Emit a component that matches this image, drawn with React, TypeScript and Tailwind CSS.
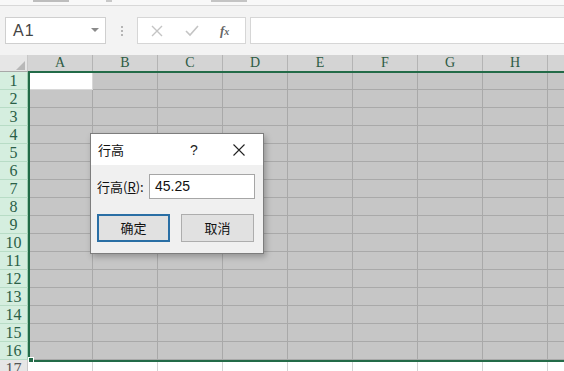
import React from 'react';

const cols = ['A', 'B', 'C', 'D', 'E', 'F', 'G', 'H', ''];
const rows = Array.from({ length: 17 }, (_, i) => i + 1);

export default function App() {
  return (
    <div className="relative w-[564px] h-[371px] overflow-hidden bg-[#f3f3f3] font-['Liberation_Sans','Noto_Sans_CJK_SC',sans-serif]">
      {/* top ribbon remnant */}
      <div className="h-[6px] bg-[#f8f8f8] border-b border-[#d8d8d8] flex items-start">
        <div className="ml-[33px] mt-0 w-[36px] h-[2px] bg-[#bdbdbd]" />
        <div className="ml-[37px] w-[6px] h-[2px] bg-[#c8c8c8]" />
        <div className="ml-[99px] w-[36px] h-[2px] bg-[#c4c4c4]" />
      </div>

      {/* formula bar */}
      <div className="flex items-center h-[27px] mt-[11px]">
        <div className="ml-[5px] w-[101px] h-[27px] bg-white border border-[#cfcfcf] flex items-center justify-between pl-[7px] pr-[6px]">
          <span className="text-[16px] text-[#444] font-['Liberation_Sans',sans-serif] tracking-[1px]">A1</span>
          <svg width="8" height="5" viewBox="0 0 8 5"><path d="M0 0 L8 0 L4 4 Z" fill="#8a8a8a" /></svg>
        </div>
        <div className="w-[31px] flex flex-col items-center gap-[2px]">
          <div className="w-[2px] h-[2px] bg-[#b5b5b5]" />
          <div className="w-[2px] h-[2px] bg-[#b5b5b5]" />
          <div className="w-[2px] h-[2px] bg-[#b5b5b5]" />
        </div>
        <div className="w-[109px] h-[27px] bg-white border border-[#d6d6d6] flex items-center">
          <svg className="ml-[13px]" width="12" height="12" viewBox="0 0 12 12"><path d="M1 1 L11 11 M11 1 L1 11" stroke="#c4c4c4" strokeWidth="1.4" /></svg>
          <svg className="ml-[22px]" width="14" height="12" viewBox="0 0 14 12"><path d="M1 6 L5 10 L13 1" stroke="#c4c4c4" strokeWidth="1.6" fill="none" /></svg>
          <span className="ml-[21px] text-[13px] italic font-bold text-[#666] font-['Liberation_Serif',serif]">f<span className="text-[10px]">x</span></span>
        </div>
        <div className="ml-[4px] flex-1 h-[27px] bg-white border-y border-l border-[#d6d6d6]" />
      </div>

      {/* grid */}
      <div className="mt-[11px] font-['Liberation_Serif',serif]">
        <div className="flex h-[17px] border-b border-[#a8a8a8]">
          <div className="w-[28px] shrink-0 bg-[#e6e6e6] border-r border-[#c8c8c8] relative">
            <svg className="absolute left-[16px] top-[6px]" width="9" height="9" viewBox="0 0 9 9"><path d="M9 0 L9 9 L0 9 Z" fill="#b8b8b8" /></svg>
          </div>
          {cols.map((c, i) => (
            <div key={i} className="w-[65px] shrink-0 bg-[#d4d4d4] border-r border-[#b4b4b4] flex items-end justify-center text-[14px] leading-[16px] text-[#2c5a43]">
              {c}
            </div>
          ))}
        </div>
        {rows.map((r) => {
          const sel = r <= 16;
          return (
            <div key={r} className="flex h-[18px]">
              <div
                className={
                  sel
                    ? 'w-[28px] shrink-0 bg-[#d5eedf] border-b border-[#b8dcc6] border-r border-r-[#9fcfb2] flex items-center justify-center text-[16px] text-[#2a6047]'
                    : 'w-[28px] shrink-0 bg-[#e6e6e6] border-r border-[#c8c8c8] flex items-center justify-center text-[16px] text-[#555]'
                }
              >
                {r}
              </div>
              {cols.map((_, i) => {
                const active = r === 1 && i === 0;
                return (
                  <div
                    key={i}
                    className={
                      active
                        ? 'w-[65px] shrink-0 bg-white border-r border-b border-[#d8d8d8]'
                        : sel
                        ? 'w-[65px] shrink-0 bg-[#c6c6c6] border-r border-b border-[#a9a9a9]'
                        : 'w-[65px] shrink-0 bg-white border-r border-[#d4d4d4]'
                    }
                  />
                );
              })}
            </div>
          );
        })}
      </div>

      {/* selection border */}
      <div className="absolute left-[28px] top-[71px] w-[540px] h-[291px] border-2 border-[#236b48]" />
      <div className="absolute left-[28px] top-[357px] w-[6px] h-[6px] bg-[#236b48] border border-white" />

      {/* dialog */}
      <div className="absolute left-[90px] top-[133px] w-[174px] h-[121px] border border-[#7d7d7d] bg-[#f0f0f0] shadow-[2px_3px_6px_rgba(0,0,0,0.25)] font-['Noto_Sans_CJK_SC',sans-serif]">
        <div className="h-[31px] bg-white flex items-center relative">
          <span className="ml-[7px] text-[13px] text-[#111]">行高</span>
          <span className="absolute left-[99px] top-[6px] text-[14px] text-[#222] font-['Liberation_Sans',sans-serif]">?</span>
          <svg className="absolute left-[142px] top-[10px]" width="12" height="12" viewBox="0 0 12 12"><path d="M0.5 0.5 L11.5 11.5 M11.5 0.5 L0.5 11.5" stroke="#222" strokeWidth="1.1" /></svg>
        </div>
        <div className="flex items-center mt-[9px] h-[25px]">
          <span className="ml-[6px] text-[13px] text-[#111] w-[52px] whitespace-nowrap">行高(<span className="underline">R</span>):</span>
          <div className="w-[106px] h-[25px] bg-white border border-[#a6a6a6] flex items-center pl-[5px] text-[14px] text-[#111] font-['Liberation_Sans',sans-serif]">45.25</div>
        </div>
        <div className="flex mt-[15px] ml-[6px] gap-[11px]">
          <div className="w-[73px] h-[28px] bg-[#e1e1e1] border-2 border-[#2a6fa5] flex items-center justify-center text-[13px] text-[#111]">确定</div>
          <div className="w-[73px] h-[28px] bg-[#e1e1e1] border border-[#adadad] flex items-center justify-center text-[13px] text-[#111]">取消</div>
        </div>
      </div>
    </div>
  );
}
